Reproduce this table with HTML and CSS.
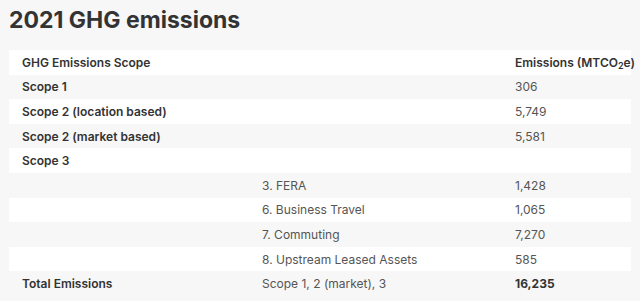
FILE: index.html
```html
<!DOCTYPE html>
<html lang="en">
<head>
<meta charset="utf-8">
<link rel="stylesheet" href="styles.css">
</head>
<body>
<h1 class="title">2021 GHG emissions</h1>
<table class="ghg">
  <colgroup>
    <col class="c1"><col class="c2"><col class="c3">
  </colgroup>
  <thead>
    <tr class="odd"><th>GHG Emissions Scope</th><th></th><th>Emissions (MTCO<sub>2</sub>e)</th></tr>
  </thead>
  <tbody>
    <tr class="even"><th>Scope 1</th><td></td><td>306</td></tr>
    <tr class="odd"><th>Scope 2 (location based)</th><td></td><td>5,749</td></tr>
    <tr class="even"><th>Scope 2 (market based)</th><td></td><td>5,581</td></tr>
    <tr class="odd"><th>Scope 3</th><td></td><td></td></tr>
    <tr class="even"><th></th><td>3. FERA</td><td>1,428</td></tr>
    <tr class="odd"><th></th><td>6. Business Travel</td><td>1,065</td></tr>
    <tr class="even"><th></th><td>7. Commuting</td><td>7,270</td></tr>
    <tr class="odd"><th></th><td>8. Upstream Leased Assets</td><td>585</td></tr>
    <tr class="even"><th>Total Emissions</th><td>Scope 1, 2 (market), 3</td><td class="strong">16,235</td></tr>
  </tbody>
</table>
</body>
</html>
```
FILE: styles.css
```css
html, body {
  margin: 0;
  padding: 0;
  background: #f7f7f7;
}
body {
  padding: 5px 9px 0 9px;
  font-family: Inter, "Liberation Sans", sans-serif;
  color: #333;
}
.title {
  margin: 0;
  font-size: 23px;
  line-height: 30px;
  font-weight: 700;
  color: #333;
}
.ghg {
  margin-top: 15px;
  width: 622px;
  border-collapse: collapse;
  table-layout: fixed;
  font-size: 12px;
}
.c1 { width: 240px; }
.c2 { width: 253px; }
.c3 { width: 129px; }
.ghg tr { height: 24.6px; }
.ghg tr.odd { background: #ffffff; }
.ghg tr.even { background: #f7f7f7; }
.ghg th, .ghg td {
  padding: 0 13px;
  text-align: left;
  vertical-align: middle;
  white-space: nowrap;
}
.ghg th {
  font-weight: 600;
  color: #333;
}
.ghg td {
  font-weight: 400;
  color: #555;
}
.ghg td.strong {
  font-weight: 700;
  color: #333;
}
.ghg sub {
  font-size: 9px;
  vertical-align: -2px;
  line-height: 0;
}
```
